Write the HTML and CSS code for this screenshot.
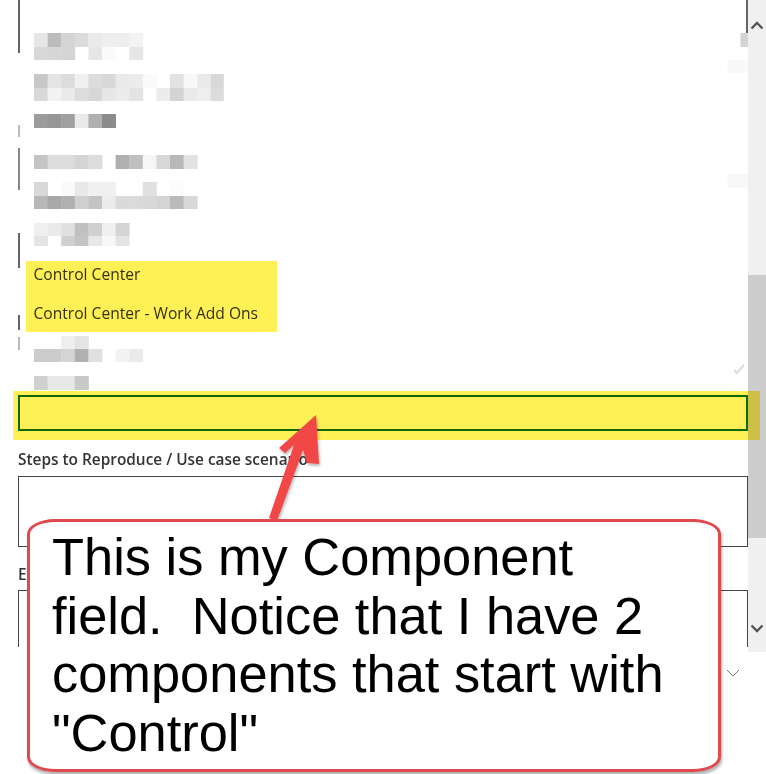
FILE: index.html
```html
<!DOCTYPE html>
<html lang="en">
<head>
    <meta charset="UTF-8">
    <title>Component field</title>
    <link rel="stylesheet" href="styles.css">
</head>
<body>
    <div class="page">
        <div class="form">
            <div class="field-top"></div>
            <div class="stub stub-a"></div>
            <div class="stub stub-b"></div>
            <div class="stub stub-c"></div>
            <div class="stub stub-d"></div>
            <div class="stub stub-e"></div>
            <div class="component-input"></div>
            <label class="field-label steps-label">Steps to Reproduce / Use case scenario</label>
            <div class="textbox"></div>
            <label class="field-label env-label">E</label>
            <div class="textbox-open"></div>
            <svg class="select-chevron" width="14" height="8" viewBox="0 0 14 8"><path d="M1 1l6 6 6-6" fill="none" stroke="#777" stroke-width="1"/></svg>
        </div>
        <div class="scrollbar">
            <svg class="scroll-arrow arrow-up" width="14" height="9" viewBox="0 0 14 9"><path d="M1.5 7.5L7 2l5.5 5.5" fill="none" stroke="#555" stroke-width="2.4"/></svg>
            <div class="scroll-thumb"></div>
            <svg class="scroll-arrow arrow-down" width="14" height="9" viewBox="0 0 14 9"><path d="M1.5 1.5L7 7l5.5-5.5" fill="none" stroke="#555" stroke-width="2.4"/></svg>
        </div>
    </div>

    <div class="dropdown">
        <svg class="blurred" width="716" height="213" viewBox="0 0 716 213">
            <g>
                <rect x="0" y="0" width="14" height="14" fill="#e6e6e6"/><rect x="13.6" y="0" width="14" height="14" fill="#bcbcbc"/><rect x="27.2" y="0" width="14" height="14" fill="#d4d4d4"/><rect x="40.8" y="0" width="14" height="14" fill="#dbdbdb"/><rect x="54.4" y="0" width="14" height="14" fill="#eaeaea"/><rect x="68" y="0" width="14" height="14" fill="#eeeeee"/><rect x="81.6" y="0" width="14" height="14" fill="#eeeeee"/><rect x="95.2" y="0" width="14" height="14" fill="#f3f3f3"/>
                <rect x="0" y="14" width="14" height="13" fill="#d8d8d8"/><rect x="13.6" y="14" width="14" height="13" fill="#d6d6d6"/><rect x="27.2" y="14" width="14" height="13" fill="#d4d4d4"/><rect x="54.4" y="14" width="14" height="13" fill="#e6e6e6"/><rect x="68" y="14" width="14" height="13" fill="#fafafa"/><rect x="95.2" y="14" width="14" height="13" fill="#e6e6e6"/>
            </g>
            <g transform="translate(0 41)">
                <rect x="0" y="0" width="14" height="14" fill="#c8c8c8"/><rect x="13.6" y="0" width="14" height="14" fill="#e4e4e4"/><rect x="27.2" y="0" width="14" height="14" fill="#dcdcdc"/><rect x="40.8" y="0" width="14" height="14" fill="#f0f0f0"/><rect x="54.4" y="0" width="14" height="14" fill="#dcdcdc"/><rect x="68" y="0" width="14" height="14" fill="#d8d8d8"/><rect x="81.6" y="0" width="14" height="14" fill="#eaeaea"/><rect x="95.2" y="0" width="14" height="14" fill="#ececec"/><rect x="108.8" y="0" width="14" height="14" fill="#fafafa"/><rect x="136" y="0" width="14" height="14" fill="#e2e2e2"/><rect x="149.6" y="0" width="14" height="14" fill="#f8f8f8"/><rect x="163.2" y="0" width="14" height="14" fill="#eaeaea"/><rect x="176.8" y="0" width="13" height="14" fill="#d8d8d8"/>
                <rect x="0" y="14" width="14" height="13" fill="#d8d8d8"/><rect x="13.6" y="14" width="14" height="13" fill="#f2f2f2"/><rect x="27.2" y="14" width="14" height="13" fill="#eaeaea"/><rect x="40.8" y="14" width="14" height="13" fill="#dcdcdc"/><rect x="54.4" y="14" width="14" height="13" fill="#d8d8d8"/><rect x="68" y="14" width="14" height="13" fill="#e6e6e6"/><rect x="81.6" y="14" width="14" height="13" fill="#ececec"/><rect x="95.2" y="14" width="14" height="13" fill="#e4e4e4"/><rect x="122.4" y="14" width="14" height="13" fill="#ececec"/><rect x="136" y="14" width="14" height="13" fill="#d4d4d4"/><rect x="149.6" y="14" width="14" height="13" fill="#eaeaea"/><rect x="163.2" y="14" width="14" height="13" fill="#eeeeee"/><rect x="176.8" y="14" width="13" height="13" fill="#dcdcdc"/>
            </g>
            <g transform="translate(0 81)">
                <rect x="0" y="0" width="14" height="14" fill="#9c9c9c"/><rect x="13.6" y="0" width="14" height="14" fill="#969696"/><rect x="27.2" y="0" width="14" height="14" fill="#a0a0a0"/><rect x="40.8" y="0" width="14" height="14" fill="#eaeaea"/><rect x="54.4" y="0" width="14" height="14" fill="#b0b0b0"/><rect x="68" y="0" width="14" height="14" fill="#8c8c8c"/>
            </g>
            <g transform="translate(0 122)">
                <rect x="0" y="0" width="14" height="14" fill="#c4c4c4"/><rect x="13.6" y="0" width="14" height="14" fill="#dcdcdc"/><rect x="27.2" y="0" width="14" height="14" fill="#dcdcdc"/><rect x="40.8" y="0" width="14" height="14" fill="#d4d4d4"/><rect x="54.4" y="0" width="14" height="14" fill="#dcdcdc"/><rect x="81.6" y="0" width="14" height="14" fill="#b0b0b0"/><rect x="95.2" y="0" width="14" height="14" fill="#c0c0c0"/><rect x="108.8" y="0" width="14" height="14" fill="#f6f6f6"/><rect x="122.4" y="0" width="14" height="14" fill="#d8d8d8"/><rect x="136" y="0" width="14" height="14" fill="#b8b8b8"/><rect x="149.6" y="0" width="14" height="14" fill="#e2e2e2"/>
            </g>
            <g transform="translate(0 149)">
                <rect x="0" y="0" width="14" height="14" fill="#d8d8d8"/><rect x="27.2" y="0" width="14" height="14" fill="#fafafa"/><rect x="40.8" y="0" width="14" height="14" fill="#e8e8e8"/><rect x="54.4" y="0" width="14" height="14" fill="#f0f0f0"/><rect x="68" y="0" width="14" height="14" fill="#f0f0f0"/><rect x="108.8" y="0" width="14" height="14" fill="#e0e0e0"/><rect x="136" y="0" width="14" height="14" fill="#fcfcfc"/>
                <rect x="0" y="14" width="14" height="13" fill="#b8b8b8"/><rect x="13.6" y="14" width="14" height="13" fill="#a8a8a8"/><rect x="27.2" y="14" width="14" height="13" fill="#b0b0b0"/><rect x="40.8" y="14" width="14" height="13" fill="#d0d0d0"/><rect x="54.4" y="14" width="14" height="13" fill="#c4c4c4"/><rect x="68" y="14" width="14" height="13" fill="#ececec"/><rect x="81.6" y="14" width="14" height="13" fill="#dadada"/><rect x="95.2" y="14" width="14" height="13" fill="#dadada"/><rect x="108.8" y="14" width="14" height="13" fill="#d8d8d8"/><rect x="122.4" y="14" width="14" height="13" fill="#d4d4d4"/><rect x="136" y="14" width="14" height="13" fill="#bababa"/><rect x="149.6" y="14" width="14" height="13" fill="#d8d8d8"/>
            </g>
            <g transform="translate(0 190)">
                <rect x="0" y="0" width="14" height="13" fill="#f0f0f0"/><rect x="13.6" y="0" width="14" height="13" fill="#eaeaea"/><rect x="27.2" y="0" width="14" height="13" fill="#e0e0e0"/><rect x="40.8" y="0" width="14" height="13" fill="#c0c0c0"/><rect x="54.4" y="0" width="14" height="13" fill="#d0d0d0"/><rect x="68" y="0" width="14" height="13" fill="#f0f0f0"/><rect x="81.6" y="0" width="14" height="13" fill="#d4d4d4"/>
                <rect x="0" y="13" width="14" height="10" fill="#e4e4e4"/><rect x="27.2" y="13" width="14" height="10" fill="#d0d0d0"/><rect x="40.8" y="13" width="14" height="10" fill="#c4c4c4"/><rect x="54.4" y="13" width="14" height="10" fill="#e8e8e8"/><rect x="68" y="13" width="14" height="10" fill="#f8f8f8"/><rect x="81.6" y="13" width="14" height="10" fill="#e4e4e4"/>
            </g>
            <rect x="706.5" y="0" width="8" height="14" fill="#d4d4d4"/>
            <rect x="693.5" y="27" width="21" height="13" fill="#f9f9f9"/>
            <rect x="693.5" y="141" width="21" height="14" fill="#f8f8f8"/>
        </svg>
        <div class="option option-first">Control Center</div>
        <div class="option">Control Center - Work Add Ons</div>
        <svg class="blurred blurred-low" width="120" height="54" viewBox="0 0 120 54">
            <rect x="27.2" y="0" width="14" height="13" fill="#eeeeee"/><rect x="40.8" y="0" width="14" height="13" fill="#e4e4e4"/>
            <rect x="0" y="13" width="14" height="13" fill="#cccccc"/><rect x="13.6" y="13" width="14" height="13" fill="#cccccc"/><rect x="27.2" y="13" width="14" height="13" fill="#d4d4d4"/><rect x="40.8" y="13" width="14" height="13" fill="#b0b0b0"/><rect x="54.4" y="13" width="14" height="13" fill="#e0e0e0"/><rect x="81.6" y="13" width="14" height="13" fill="#f2f2f2"/><rect x="95.2" y="13" width="14" height="13" fill="#eaeaea"/>
            <rect x="0" y="40" width="14" height="14" fill="#d0d0d0"/><rect x="13.6" y="40" width="14" height="14" fill="#e8e8e8"/><rect x="27.2" y="40" width="14" height="14" fill="#e8e8e8"/><rect x="40.8" y="40" width="14" height="14" fill="#c8c8c8"/>
        </svg>
        <svg class="option-check" width="12" height="10" viewBox="0 0 12 10"><path d="M1 6l3 3 7-8" fill="none" stroke="#dcdcdc" stroke-width="2"/></svg>
    </div>

    <div class="marker marker-options"></div>
    <div class="marker marker-input"></div>

    <svg class="arrow" width="80" height="125" viewBox="0 0 80 125">
        <defs>
            <filter id="arrow-shadow" x="-20%" y="-20%" width="150%" height="140%">
                <feDropShadow dx="1" dy="2" stdDeviation="1.5" flood-color="#000" flood-opacity="0.3"/>
            </filter>
        </defs>
        <!-- tip is at 316,415 on the page -->
        <path d="M56 5L59 54L47 53L43 40L17 111L9 108L34 35L25 43L19 38Z" fill="#f24646" filter="url(#arrow-shadow)"/>
    </svg>

    <div class="callout">This is my Component field.&nbsp; Notice that I have 2 components that start with "Control"</div>
</body>
</html>
```

FILE: styles.css
```css
body {
    margin: 0;
    height: 774px;
    overflow: hidden;
    position: relative;
    background-color: #fff;
    font-family: "Open Sans", "Noto Sans", sans-serif;
    color: #333;
}

.page {
    display: flex;
    align-items: flex-start;
    padding-left: 18px;
}

.form {
    width: 730px;
    height: 774px;
    position: relative;
}

.field-top {
    height: 53px;
    border-left: 2px solid #666;
    border-right: 2px solid #666;
}

.stub {
    width: 2px;
}

.stub-a {
    height: 12px;
    margin-top: 72px;
    background-color: #bbb;
}

.stub-b {
    height: 42px;
    margin-top: 11px;
    background-color: #888;
}

.stub-c {
    height: 35px;
    margin-top: 43px;
    background-color: #666;
}

.stub-d {
    height: 15px;
    margin-top: 47px;
    background-color: #666;
}

.stub-e {
    height: 13px;
    margin-top: 7px;
    background-color: #bbb;
}

.component-input {
    height: 32px;
    margin-top: 45px;
    border: 2px solid #0f6e22;
}

.field-label {
    display: block;
    font-size: 15.4px;
    font-weight: 600;
    line-height: 18px;
}

.steps-label {
    margin-top: 20px;
}

.textbox {
    height: 69px;
    margin-top: 7px;
    border: 1px solid #444;
}

.env-label {
    margin-top: 19px;
}

.textbox-open {
    height: 56px;
    margin-top: 6px;
    border: 1px solid #444;
    border-bottom: none;
}

.select-chevron {
    position: absolute;
    left: 708px;
    top: 669px;
}

.scrollbar {
    width: 18px;
    height: 652px;
    position: relative;
    background-color: #f0f0f0;
}

.scroll-thumb {
    height: 263px;
    margin-top: 275px;
    background-color: #cdcdcd;
}

.scroll-arrow {
    position: absolute;
    left: 2px;
}

.arrow-up {
    top: 21px;
}

.arrow-down {
    top: 624px;
}

.dropdown {
    position: absolute;
    left: 20px;
    top: 33px;
    width: 714.5px;
    height: 357px;
    padding-left: 13.5px;
    overflow: hidden;
    background-color: #fff;
}

.blurred {
    display: block;
    filter: blur(0.4px);
}

.option {
    height: 39px;
    line-height: 39px;
    font-size: 15.6px;
    white-space: nowrap;
}

.option-first {
    margin-top: 9px;
}

.blurred-low {
    margin-top: 3px;
}

.option-check {
    position: absolute;
    right: 3px;
    top: 331px;
}

.marker {
    position: absolute;
    background-color: #fff155;
    mix-blend-mode: multiply;
}

.marker-options {
    left: 26px;
    top: 261px;
    width: 251px;
    height: 71px;
}

.marker-input {
    left: 13px;
    top: 391px;
    width: 747px;
    height: 49px;
}

.arrow {
    position: absolute;
    left: 260px;
    top: 410px;
}

.callout {
    position: absolute;
    left: 27px;
    top: 519px;
    width: 626px;
    height: 241px;
    padding: 6px 40px 0 22px;
    border: 3px solid #e0494d;
    border-radius: 28px / 15px;
    background-color: #fff;
    box-shadow: 1px 3px 3px rgba(0, 0, 0, 0.3);
    font-family: "Liberation Sans", Arial, sans-serif;
    font-size: 52.4px;
    line-height: 58.5px;
    color: #000;
}
```
